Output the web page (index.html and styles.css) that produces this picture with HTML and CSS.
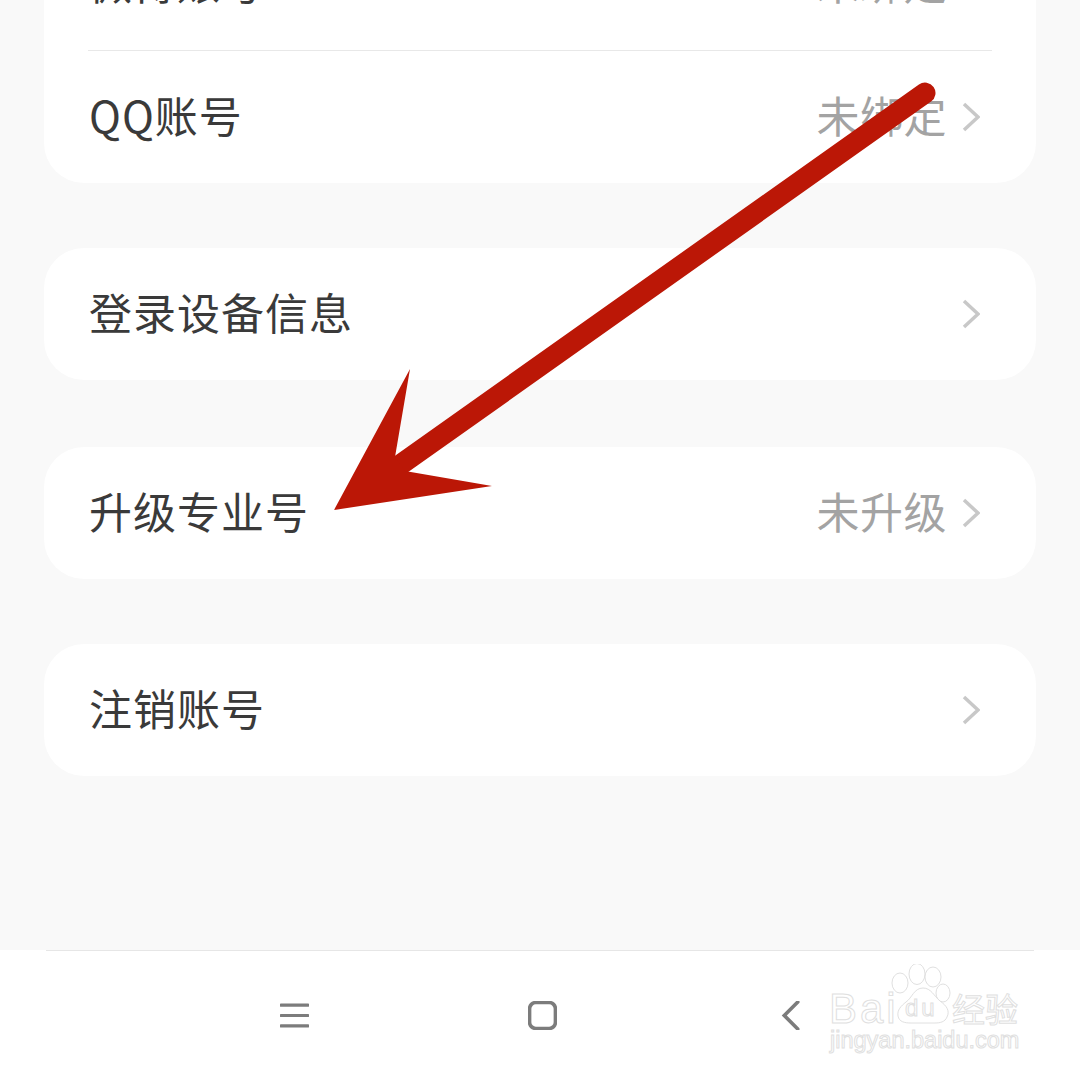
FILE: index.html
```html
<!doctype html>
<html lang="zh-CN">
<head>
    <meta charset="UTF-8">
    <title>账号与安全</title>
    <link rel="stylesheet" href="styles.css">
</head>
<body>
    <div class="screen">
        <div class="list">
            <div class="card">
                <div class="row">
                    <span class="row-title">微博账号</span>
                    <span class="row-value">未绑定</span>
                    <svg class="chevron" viewBox="0 0 18 30"><path d="M2 2l14 13L2 28"/></svg>
                </div>
                <div class="divider"></div>
                <div class="row">
                    <span class="row-title">QQ账号</span>
                    <span class="row-value">未绑定</span>
                    <svg class="chevron" viewBox="0 0 18 30"><path d="M2 2l14 13L2 28"/></svg>
                </div>
            </div>
            <div class="card">
                <div class="row">
                    <span class="row-title">登录设备信息</span>
                    <svg class="chevron" viewBox="0 0 18 30"><path d="M2 2l14 13L2 28"/></svg>
                </div>
            </div>
            <div class="card card-upgrade">
                <div class="row">
                    <span class="row-title">升级专业号</span>
                    <span class="row-value">未升级</span>
                    <svg class="chevron" viewBox="0 0 18 30"><path d="M2 2l14 13L2 28"/></svg>
                </div>
            </div>
            <div class="card">
                <div class="row">
                    <span class="row-title">注销账号</span>
                    <svg class="chevron" viewBox="0 0 18 30"><path d="M2 2l14 13L2 28"/></svg>
                </div>
            </div>
        </div>

        <div class="navbar">
            <div class="navbar-inner">
                <div class="nav-slot">
                    <svg class="nav-icon nav-menu" viewBox="0 0 28 24"><path d="M1 2h26M1 12h26M1 22h26"/></svg>
                </div>
                <div class="nav-slot">
                    <svg class="nav-icon" viewBox="0 0 28 28"><rect x="1.5" y="1.5" width="25" height="25" rx="6"/></svg>
                </div>
                <div class="nav-slot">
                    <svg class="nav-icon" viewBox="0 0 16 28"><path d="M15 1L2 14l13 13"/></svg>
                </div>
            </div>
        </div>

        <!-- стрелка поверх скриншота -->
        <svg class="arrow" viewBox="0 0 1080 1080">
            <line x1="925" y1="93" x2="400" y2="465"/>
            <polygon points="334,510 410,369 395,457 405,471 492,486"/>
        </svg>

        <div class="watermark">
            <svg class="paw" viewBox="0 0 66 64">
                <ellipse cx="12" cy="19" rx="8" ry="10"/>
                <ellipse cx="29" cy="10" rx="8" ry="10.5"/>
                <ellipse cx="45" cy="13" rx="8" ry="10"/>
                <ellipse cx="55" cy="29" rx="7" ry="9"/>
                <path d="M35 24c8 0 11 8 17 13 7 5 10 10 7 16-2 5-7 6-12 6H23c-6 0-12-1-13-7-1-6 3-10 8-14 6-4 8-14 17-14z"/>
            </svg>
            <span class="wm-baidu">Bai</span>
            <span class="wm-du">du</span>
            <span class="wm-jingyan">经验</span>
            <span class="wm-url">jingyan.baidu.com</span>
        </div>
    </div>
</body>
</html>
```

FILE: styles.css
```css
* {
    box-sizing: border-box;
}
html, body {
    margin: 0;
    padding: 0;
}
body {
    font-family: "Noto Sans CJK SC", "Noto Sans", sans-serif;
    background-color: #f9f9f9;
}
.screen {
    position: relative;
    width: 1080px;
    height: 1080px;
    overflow: hidden;
    display: flex;
    flex-direction: column;
}
.list {
    flex: 1;
    margin-top: -82px;
    padding: 0 44px;
    display: flex;
    flex-direction: column;
    gap: 65px;
}
.card {
    background: #fff;
    border-radius: 40px;
}
.card-upgrade {
    margin-top: 2px;
}
.row {
    height: 132px;
    padding: 0 56px 0 45px;
    display: flex;
    align-items: center;
}
.row-title {
    flex: 1;
    margin-top: -7px;
    font-size: 43px;
    letter-spacing: 1px;
    color: #3a3a3a;
}
.row-value {
    margin-top: -7px;
    margin-right: 15px;
    font-size: 43px;
    letter-spacing: .5px;
    color: #a3a3a3;
}
.chevron {
    width: 18px;
    height: 30px;
    fill: none;
    stroke: #c8c8c8;
    stroke-width: 3.5;
}
.divider {
    height: 1px;
    margin: 0 44px;
    background: #e8e8e8;
}
.navbar {
    height: 130px;
    padding: 0 46px;
    background: #fff;
}
.navbar-inner {
    height: 100%;
    padding: 0 0 1px 124px;
    border-top: 1px solid #e6e6e6;
    display: flex;
    align-items: center;
}
.nav-slot {
    width: 248px;
    display: flex;
    justify-content: center;
}
.nav-icon {
    width: 29px;
    height: 29px;
    fill: none;
    stroke: #7c7c7c;
    stroke-width: 3.5;
    stroke-linecap: round;
}
.nav-menu {
    stroke-width: 3;
}
.arrow {
    position: absolute;
    top: 0;
    left: 0;
    width: 1080px;
    height: 1080px;
}
.arrow line {
    stroke: #bb1706;
    stroke-width: 21;
    stroke-linecap: round;
}
.arrow polygon {
    fill: #bb1706;
}
.watermark {
    position: absolute;
    left: 828px;
    top: 964px;
    width: 200px;
    height: 94px;
    color: #fff;
    -webkit-text-stroke: 1px #e0e0e0;
}
.paw {
    position: absolute;
    left: 60px;
    top: 0;
    width: 66px;
    height: 64px;
    fill: #fff;
    stroke: #e0e0e0;
    stroke-width: 1;
}
.wm-baidu {
    position: absolute;
    left: 1px;
    top: 26px;
    font-family: "Liberation Sans", sans-serif;
    font-size: 42px;
    line-height: 38px;
    letter-spacing: 3px;
}
.wm-du {
    position: absolute;
    left: 77px;
    top: 32px;
    font-family: "Liberation Sans", sans-serif;
    font-size: 24px;
    line-height: 24px;
    letter-spacing: 3px;
}
.wm-jingyan {
    position: absolute;
    left: 124px;
    top: 27px;
    font-size: 33px;
    line-height: 34px;
}
.wm-url {
    position: absolute;
    left: 2px;
    top: 64px;
    font-family: "Liberation Sans", sans-serif;
    font-size: 23.5px;
    line-height: 24px;
}
```
